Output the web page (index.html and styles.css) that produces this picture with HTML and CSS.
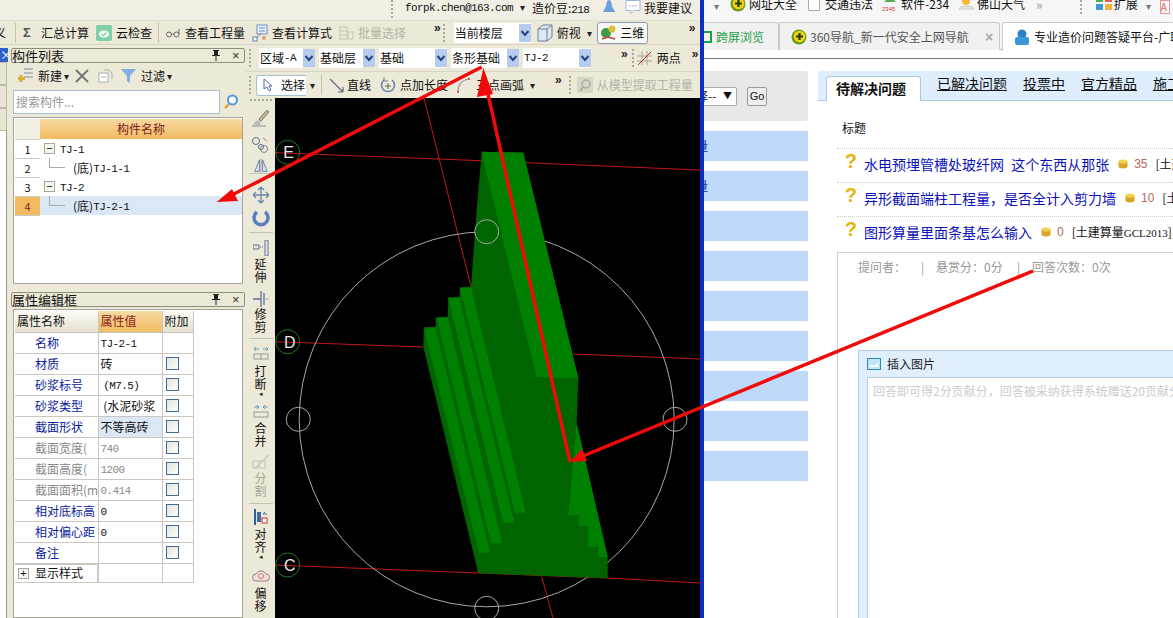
FILE: index.html
```html
<!DOCTYPE html>
<html lang="zh-CN">
<head>
<meta charset="utf-8">
<title>GCL2013</title>
<link rel="stylesheet" href="styles.css">
</head>
<body>
<svg class="defs" aria-hidden="true">
  <symbol id="chev" viewBox="0 0 12 18"><path d="M2.5 7l3.5 4 3.5-4" fill="none" stroke="#24457f" stroke-width="2"/></symbol>
  <symbol id="i360" viewBox="0 0 16 16"><circle cx="8" cy="8" r="7.5" fill="#6b9e12"/><circle cx="8.5" cy="7.5" r="5.8" fill="#f2d21c"/><path d="M8.5 4v7M5 7.5h7" stroke="#23400a" stroke-width="2.2"/></symbol>
  <symbol id="coin" viewBox="0 0 10 10"><ellipse cx="5" cy="2.5" rx="4.5" ry="2" fill="#f1d24c"/><path d="M.5 2.5v5c0 1.2 2 2 4.5 2s4.5-.8 4.5-2v-5c0 1.2-2 2-4.5 2s-4.5-.8-4.5-2z" fill="#d9a520"/></symbol>
</svg>
<div class="stage">
  <section class="app">
    <div class="row1">
      <i class="grip g1"></i>
      <span class="m email">forpk.chen@163.com</span>
      <span class="caret c1">▾</span>
      <span class="bean">造价豆:<span class="m">218</span></span>
      <svg class="bell" width="14" height="15" viewBox="0 0 14 15"><path d="M7 0c2 0 2.500 2 3 6l3 6H1l3-6C4.500 2 5 0 7 0z" fill="#6f9fd8"/></svg>
      <svg class="bubble" width="16" height="15" viewBox="0 0 16 15"><path d="M1 .5h14v10H9l-3 3v-3H1z" fill="#fff" stroke="#9db4d6"/><path d="M4 6h8" stroke="#9db4d6" stroke-dasharray="2 1"/></svg>
      <span class="sug">我要建议</span>
    </div>
    <div class="row2">
      <span class="cut">义</span><i class="vsep s1"></i>
      <span class="sigma">Σ</span><span class="t2 a1">汇总计算</span>
      <svg class="a2" width="16" height="16" viewBox="0 0 16 16"><rect width="16" height="16" rx="2" fill="#7fd0a8"/><ellipse cx="8" cy="9" rx="5" ry="3.500" fill="#fff"/><path d="M5.500 9l2 1.500 3-3" fill="none" stroke="#7fd0a8" stroke-width="1.500"/></svg>
      <span class="t2 a3">云检查</span><i class="vsep s2"></i>
      <svg class="a4" width="14" height="10" viewBox="0 0 14 10"><circle cx="3" cy="6.500" r="2.500" fill="none" stroke="#666"/><circle cx="10.500" cy="6.500" r="2.500" fill="none" stroke="#666"/><path d="M5.500 6h2.500M13 6V1" stroke="#666"/></svg>
      <span class="t2 a5">查看工程量</span>
      <svg class="a6" width="16" height="18" viewBox="0 0 16 18"><rect x="5" y="1" width="10" height="9" fill="#e6eefb" stroke="#6f8fc4"/><path d="M7 4h6M7 7h6" stroke="#6f8fc4"/><path d="M3 16L9 9" stroke="#888"/><rect x="1" y="13" width="4" height="4" fill="#fff" stroke="#5b7fb8"/><circle cx="12" cy="14" r="2" fill="#d9a86a"/></svg>
      <span class="t2 a7">查看计算式</span>
      <svg class="a8" width="16" height="16" viewBox="0 0 16 16"><path d="M1 2h9M1 6h9M1 10h9M1 14h9M2 2v12M9 2v12" stroke="#c9c6b8"/><rect x="10" y="7" width="5" height="7" fill="none" stroke="#c9c6b8"/></svg>
      <span class="t2 off a9">批量选择</span>
      <span class="more m1">»</span><i class="grip g2"></i>
      <span class="fld floor">当前楼层<svg class="dd" width="12" height="18"><use href="#chev"/></svg></span>
      <svg class="a10" width="16" height="18" viewBox="0 0 16 18"><path d="M1 5l5-4h9v12l-5 4H1z" fill="#dbe8f2" stroke="#6d7f90"/><path d="M1 5h9v12M10 5l5-4" fill="none" stroke="#6d7f90"/></svg>
      <span class="t2 a11">俯视</span>
      <span class="caret c2">▾</span>
      <span class="btn3d"><svg width="18" height="17" viewBox="0 0 18 17"><circle cx="6" cy="9" r="5" fill="#3f9a45"/><circle cx="12" cy="5" r="3.500" fill="#d8c13c"/><path d="M2 15l6-2 7 2" fill="none" stroke="#b44" stroke-width="1.500"/></svg>三维</span>
      <span class="more m2">»</span>
    </div>
    <div class="main">
      <aside class="side">
        <div class="sidehead">×</div>
        <div class="sidetab"></div><div class="sidetab"></div><div class="sidetab"></div>
        <div class="sidebody"></div>
      </aside>
      <div class="panels">
        <div class="ptitle"><span>构件列表</span><b class="pin">
          <svg width="8" height="11" viewBox="0 0 8 11"><path d="M1 0h6v1H6v4h2v1H4.500v5h-1V6H0V5h2V1H1z" fill="#222"/></svg></b><b class="x">×</b></div>
        <div class="ptools">
          <svg class="p1" width="17" height="17" viewBox="0 0 17 17"><path d="M7 2h9M7 6h9M7 10h9" stroke="#7a8ea8"/><path d="M4 8v7M1 11.500h7" stroke="#d4b23c" stroke-width="3"/></svg>
          <span class="p2">新建</span><span class="caret c3">▾</span>
          <svg class="p3" width="14" height="14" viewBox="0 0 14 14"><path d="M1 1l12 12M13 1L1 13" stroke="#777" stroke-width="2"/></svg>
          <svg class="p4" width="16" height="14" viewBox="0 0 16 14"><rect x="1" y="4" width="9" height="9" fill="#fff" stroke="#a8b2bf"/><path d="M6 1h5l3 3v6" fill="none" stroke="#a8b2bf"/><path d="M3 8h5" stroke="#a8b2bf"/></svg>
          <svg class="p5" width="15" height="14" viewBox="0 0 15 14"><path d="M0 0h15L9 7v7l-3-2V7z" fill="#83aee0"/></svg>
          <span class="p6">过滤</span><span class="caret c4">▾</span>
        </div>
        <div class="psearch"><span class="sinput">搜索构件...</span>
          <svg width="16" height="16" viewBox="0 0 16 16"><circle cx="9.500" cy="6" r="4.500" fill="#fff" stroke="#4e9ad8" stroke-width="2"/><path d="M6 10l-4 4" stroke="#e0a73c" stroke-width="2.500"/></svg></div>
        <div class="pbody listbody">
          <table class="ltable">
            <tr class="lh"><th class="n"></th><th class="h">构件名称</th></tr>
            <tr><td class="n">1</td><td class="tc"><i class="box">−</i><span class="m">TJ-1</span></td></tr>
            <tr><td class="n">2</td><td class="tc"><i class="conn"></i><span>(底)</span><span class="m">TJ-1-1</span></td></tr>
            <tr><td class="n">3</td><td class="tc"><i class="box">−</i><span class="m">TJ-2</span></td></tr>
            <tr class="sel"><td class="n">4</td><td class="tc"><i class="conn"></i><span>(底)</span><span class="m">TJ-2-1</span></td></tr>
          </table>
        </div>
        <div class="ptitle t-second"><span>属性编辑框</span><b class="pin">
          <svg width="8" height="11" viewBox="0 0 8 11"><path d="M1 0h6v1H6v4h2v1H4.500v5h-1V6H0V5h2V1H1z" fill="#222"/></svg></b><b class="x">×</b></div>
        <div class="pbody propbody">
          <table class="ptable">
            <tr class="ph"><th class="pn-h">属性名称</th><th class="pv-h">属性值</th><th class="pa-h">附加</th></tr>
            <tr><td class="pn">名称</td><td><span class="m">TJ-2-1</span></td><td></td></tr>
            <tr><td class="pn">材质</td><td>砖</td><td><i class="cb"></i></td></tr>
            <tr><td class="pn">砂浆标号</td><td>&nbsp;<span class="m">(M7.5)</span></td><td><i class="cb"></i></td></tr>
            <tr><td class="pn">砂浆类型</td><td class="clip">&nbsp;(水泥砂浆</td><td><i class="cb"></i></td></tr>
            <tr><td class="pn">截面形状</td><td class="cur">不等高砖</td><td><i class="cb"></i></td></tr>
            <tr class="dis"><td class="pn">截面宽度(</td><td><span class="m">740</span></td><td><i class="cb"></i></td></tr>
            <tr class="dis"><td class="pn">截面高度(</td><td><span class="m">1200</span></td><td><i class="cb"></i></td></tr>
            <tr class="dis"><td class="pn clip">截面面积(m</td><td><span class="m">0.414</span></td><td><i class="cb"></i></td></tr>
            <tr><td class="pn">相对底标高</td><td><span class="m">0</span></td><td><i class="cb"></i></td></tr>
            <tr><td class="pn">相对偏心距</td><td><span class="m">0</span></td><td><i class="cb"></i></td></tr>
            <tr><td class="pn">备注</td><td></td><td><i class="cb"></i></td></tr>
            <tr class="plast"><td class="pshow"><i class="box">+</i>显示样式</td><td></td><td></td></tr>
          </table>
        </div>
      </div>
      <div class="work">
        <div class="row3">
          <i class="grip g3"></i>
          <span class="fld f1">区域<span class="m">-A</span></span><svg class="dd" width="12" height="18"><use href="#chev"/></svg>
          <span class="fld f2">基础层</span><svg class="dd" width="12" height="18"><use href="#chev"/></svg>
          <span class="fld f3">基础<svg class="dd" width="12" height="18"><use href="#chev"/></svg></span>
          <span class="fld f4">条形基础</span><svg class="dd" width="12" height="18"><use href="#chev"/></svg>
          <span class="fld f5"><span class="m">TJ-2</span><svg class="dd" width="12" height="18"><use href="#chev"/></svg></span>
          <span class="more m3">»</span><i class="grip g4"></i>
          <svg class="r1" width="15" height="16" viewBox="0 0 15 16"><path d="M0 6h15M0 11h15M5 1v14M10 1v14" stroke="#a9a594"/><path d="M1 15L14 2" stroke="#a33"/></svg>
          <span class="r2">两点</span>
          <span class="more m4">»</span>
        </div>
        <div class="row4">
          <i class="grip g5"></i>
          <span class="selbtn"><svg width="12" height="14" viewBox="0 0 12 14"><path d="M2 1v10l3-2 2 4 2-1-2-4h3z" fill="#fff" stroke="#4f6ea6"/></svg><span>选择</span></span>
          <span class="caret c5">▾</span><i class="vsep s3"></i>
          <svg class="q1" width="15" height="15" viewBox="0 0 15 15"><path d="M1 1l13 13M14 14V9M14 14H9" fill="none" stroke="#667" stroke-width="1.200"/></svg>
          <span class="q2">直线</span>
          <svg class="q3" width="16" height="16" viewBox="0 0 16 16"><path d="M4 3a6.500 6.500 0 1 0 8 0" fill="none" stroke="#6a7fa6" stroke-width="1.500"/><path d="M8 6v6M5 9h6" stroke="#666"/><path d="M4 0v4h4" fill="none" stroke="#6a7fa6"/></svg>
          <span class="q4">点加长度</span>
          <svg class="q5" width="14" height="16" viewBox="0 0 14 16"><path d="M2 15C2 8 6 3 13 2" fill="none" stroke="#999" stroke-width="1.200"/><circle cx="2" cy="15" r="1" fill="#d33"/><circle cx="13" cy="2" r="1" fill="#d33"/></svg>
          <span class="q6">三点画弧</span><span class="caret c6">▾</span>
          <span class="more m5">»</span><i class="grip g6"></i>
          <svg class="q7" width="16" height="16" viewBox="0 0 16 16"><rect width="16" height="16" fill="#d9d6c8"/><circle cx="9" cy="7" r="4" fill="none" stroke="#aaa" stroke-width="1.500"/><path d="M6 10l-3 4" stroke="#aaa" stroke-width="2"/></svg>
          <span class="q8 off">从模型提取工程量</span>
        </div>
        <div class="cvrow">
          <nav class="vtool">
            <i class="hgrip"></i>
            <svg class="mt5" width="20" height="20" viewBox="0 0 20 20"><path d="M8 11L16 2l2 2-8 9z" fill="#c9b98a" stroke="#777"/><path d="M2 17c2-4 5-6 8-4l-1 4z" fill="#bbb"/><path d="M1 18h14" stroke="#888"/></svg>
            <svg class="mt7" width="20" height="20" viewBox="0 0 20 20"><circle cx="5" cy="6" r="3.500" fill="none" stroke="#5c7096"/><circle cx="13" cy="14" r="3.500" fill="none" stroke="#888"/><circle cx="10" cy="12" r="2.500" fill="none" stroke="#5c7096"/><path d="M12 3l4 3" stroke="#888"/></svg>
            <svg class="mt4" width="18" height="14" viewBox="0 0 20 18"><path d="M8 1L2 16h6zM12 1l6 15h-6z" fill="#d5e0ef" stroke="#5c7096"/><path d="M10 0v18" stroke="#888"/></svg>
            <i class="hsep"></i>
            <svg class="mt12" width="18" height="18" viewBox="0 0 18 18"><path d="M9 1v16M1 9h16M9 1l-3 3M9 1l3 3M9 17l-3-3M9 17l3-3M1 9l3-3M1 9l3 3M17 9l-3-3M17 9l-3 3" fill="none" stroke="#6b86ad" stroke-width="1.300"/></svg>
            <svg class="mt5" width="18" height="18" viewBox="0 0 18 18"><path d="M5 3a7 7 0 1 0 8 0" fill="none" stroke="#5a7fc0" stroke-width="3.500"/></svg>
            <i class="hsep mt5"></i>
            <svg class="mt7" width="16" height="16" viewBox="0 0 16 16"><path d="M0 5h6v4H0zM12 0h3v16h-3z" fill="none" stroke="#5c7096"/><path d="M7 7h4" stroke="#5c7096" stroke-dasharray="1 1"/></svg>
            <span class="vt mt2">延伸</span>
            <svg class="mt8" width="16" height="16" viewBox="0 0 16 16"><path d="M0 8h8M8 0v16M11 2v12" stroke="#5c7096" stroke-width="1.300"/><path d="M11 8h5" stroke="#aaa"/></svg>
            <span class="vt mt1">修剪</span>
            <i class="hsep mt5"></i>
            <svg class="mt7" width="16" height="14" viewBox="0 0 16 14"><path d="M1 3h5M15 3h-5M1 3l2-2M1 3l2 2M15 3l-2-2M15 3l-2 2" fill="none" stroke="#5c9ac0"/><rect x="1" y="8" width="14" height="5" fill="none" stroke="#999"/><path d="M8 8v5" stroke="#999"/></svg>
            <span class="vt mt5">打断</span><span class="tri">◂</span>
            <svg class="mt7" width="16" height="14" viewBox="0 0 16 14"><path d="M1 3h5M15 3h-5M6 3L4 1M6 3L4 5M10 3l2-2M10 3l2 2" fill="none" stroke="#5c9ac0"/><rect x="1" y="8" width="14" height="5" fill="none" stroke="#999"/></svg>
            <span class="vt mt4">合并</span>
            <svg class="mt7" width="20" height="16" viewBox="0 0 20 16"><path d="M2 7h12v7H2zM8 7v7M4 14L18 1" fill="none" stroke="#c9c6b8" stroke-width="1.200"/></svg>
            <span class="vt off mt2">分割</span>
            <i class="hsep mt6"></i>
            <svg class="mt5" width="14" height="16" viewBox="0 0 14 16"><path d="M1 0v16" stroke="#2f5d9e" stroke-width="2"/><rect x="3" y="3" width="4" height="10" fill="#3d6db0"/><rect x="8" y="9" width="5" height="5" fill="#fff" stroke="#c33"/><path d="M13 5H9l2-2" fill="none" stroke="#5c7096"/></svg>
            <span class="vt mt3">对齐</span><span class="tri">◂</span>
            <svg class="mt8" width="18" height="15" viewBox="0 0 18 15"><path d="M4 13a3.500 3.500 0 0 1 0-7 5.500 5.500 0 0 1 10 0 3.500 3.500 0 0 1 0 7z" fill="#f3dcdc" stroke="#888"/><circle cx="9" cy="8" r="2.500" fill="none" stroke="#c77"/></svg>
            <span class="vt mt4">偏移</span>
          </nav>
          <div class="canvas">
            <svg class="scene" width="425" height="520" viewBox="275 98 425 520">
              <g class="grid">
                <path d="M275 152.700L481 160.700M525 162.700L700 170M275 341.700L423 347M573 354L700 359M275 565L478 573M478 573L608 578L700 583M424 98L471 286.700M541.700 576.700L553 618"/>
              </g>
              <g class="ring">
                <circle cx="486.700" cy="419.300" r="187.500"/>
              </g>
              <path class="dk" d="M481.700 151.700L523.300 152.700L578.300 378.300L576.700 423.300L607.700 557.300V578.300L478.300 573.300L423.300 346.700L424 327.300L435.700 326.700V317.300L447.700 316.700L448.300 297.300L459.300 296.700L460 287.300L471 286.700L476.700 210z"/>
              <path class="lt" d="M481.700 151.700L523.300 152.700L578.300 378.300L536.700 377.300L483.300 160z"/>
              <path class="lt" d="M424.500 330L435.300 327.300L490 552.700L479 552.700z"/>
              <path class="lt" d="M436.700 318.300L447.700 317.300L502 542.700L491 542.700z"/>
              <path class="lt" d="M448.300 298.300L459.300 297.700L514.300 522.700L503.300 522.700z"/>
              <path class="lt" d="M460 288.300L471 287.700L525.700 512.700L515 512.700z"/>
              <path class="lt" d="M576.700 423.300L607.700 557.300H598.300V546.700H588.300V526H579V515H568.300z"/>
              <g class="ring thin">
                <circle cx="486.700" cy="231.700" r="12"/><circle cx="298.300" cy="419.300" r="12"/><circle cx="675" cy="419.300" r="12"/><circle cx="486.700" cy="608.300" r="12"/>
              </g>
              <g class="axis">
                <circle cx="287.700" cy="152.300" r="12"/><circle cx="287.700" cy="341.700" r="12"/><circle cx="287.700" cy="565" r="12"/>
              </g>
              <text class="lbl" x="288.700" y="158">E</text>
              <text class="lbl" x="289.700" y="347.500">D</text>
              <text class="lbl" x="289.700" y="571">C</text>
            </svg>
          </div>
        </div>
      </div>
    </div>
  </section>
  <div class="bar"></div>
  <section class="browser">
    <div class="favs">
      <span class="caret c7">▾</span>
      <svg class="b1" width="16" height="16"><use href="#i360"/></svg><span class="b2">网址大全</span>
      <svg class="b3" width="12" height="15" viewBox="0 0 12 15"><path d="M.5.500h7l4 4v10H.5z" fill="#fff" stroke="#aaa"/></svg><span class="b4">交通违法</span>
      <svg class="b5" width="16" height="16" viewBox="0 0 16 16"><path d="M8 0l6 6H2z" fill="#5aa85a"/><text class="num" x="0" y="15">2345</text></svg><span class="b6">软件-234</span>
      <svg class="b7" width="17" height="14" viewBox="0 0 17 14"><circle cx="8" cy="5" r="4" fill="#f6b93b"/><path d="M1 13c1-4 14-4 15 0z" fill="#e6e6e6" stroke="#ccc"/></svg><span class="b8">佛山天气</span>
      <span class="b9">»</span><i class="grip g7"></i>
      <svg class="b10" width="16" height="14" viewBox="0 0 16 14"><rect width="7" height="6" fill="#4caf50"/><rect x="9" width="7" height="6" fill="#e55"/><rect y="8" width="7" height="6" fill="#3c9ad6"/><rect x="9" y="8" width="7" height="6" fill="#f1b43c"/></svg>
      <span class="b11">扩展</span><span class="caret c8">▾</span>
      <span class="b12">A</span>
    </div>
    <div class="tabs">
      <div class="tab t1"><i class="scr"></i>跨屏浏览</div>
      <div class="tab t2b"><svg width="16" height="16"><use href="#i360"/></svg><span>360导航_新一代安全上网导航</span><b>×</b></div>
      <div class="tab t3"><svg width="16" height="16" viewBox="0 0 16 16"><circle cx="8" cy="5" r="4.500" fill="#2f7fc8"/><rect x="1" y="8" width="14" height="8" rx="2" fill="#3a98d8"/></svg><span>专业造价问题答疑平台-广联达服务新干线</span></div>
    </div>
    <div class="tabgap"></div>
    <div class="page">
      <aside class="nav">
        <div class="navbox"><span class="sel-mini"><span class="sm-t">选择--</span><b>▼</b></span><span class="go">Go</span></div>
        <div class="navitem"><span>量</span></div><div class="navitem"><span>量</span></div><div class="navitem"></div>
        <div class="navitem"></div><div class="navitem"></div><div class="navitem"></div>
        <div class="navitem"></div><div class="navitem"></div><div class="navitem"></div>
      </aside>
      <main class="qa">
        <div class="qtabs">
          <span class="qt on">待解决问题</span><a class="qt">已解决问题</a><a class="qt">投票中</a><a class="qt">官方精品</a><a class="qt">施工</a>
        </div>
        <div class="qhead">标题</div>
        <div class="qrow"><span class="q">?</span><a>水电预埋管槽处玻纤网 这个东西从那张</a><svg class="coin" width="10" height="10"><use href="#coin"/></svg><span class="pts">35</span><span class="cat">[土建算量GCL2013]</span></div>
        <div class="qrow"><span class="q">?</span><a>异形截面端柱工程量&#xFF0C;是否全计入剪力墙</a><svg class="coin" width="10" height="10"><use href="#coin"/></svg><span class="pts">10</span><span class="cat">[土建算量GCL2013]</span></div>
        <div class="qrow last"><span class="q">?</span><a>图形算量里面条基怎么输入</a><svg class="coin" width="10" height="10"><use href="#coin"/></svg><span class="pts">0</span><span class="cat">[土建算量<span class="gcl">GCL2013</span>]</span></div>
        <div class="detail">
          <div class="meta"><span class="w1">提问者&#xFF1A;</span><i>|</i><span class="w2">悬赏分&#xFF1A;0分</span><i>|</i><span>回答次数&#xFF1A;0次</span></div>
          <div class="editor">
            <div class="edbar"><svg width="14" height="12" viewBox="0 0 14 12"><rect x=".5" y=".5" width="13" height="11" fill="#bfe6f5" stroke="#2f86b8"/><path d="M2 9l3-3 2 2 4-3v4z" fill="#fff"/></svg><span>插入图片</span></div>
            <div class="edarea">回答即可得2分贡献分&#xFF0C;回答被采纳获得系统赠送20贡献分</div>
          </div>
        </div>
      </main>
    </div>
  </section>
  <svg class="arrows" width="1173" height="618" viewBox="0 0 1173 618" aria-hidden="true">
    <path d="M481.700 67L228 197"/>
    <path class="head" d="M216.700 202L232 189L238 201z"/>
    <path d="M570 462L486 85"/>
    <path class="head" d="M483.300 68L477 97L493 94z"/>
    <path d="M1033 271L583 456"/>
    <path class="head" d="M570 462L582 449L587 461z"/>
  </svg>
</div>
</body>
</html>
```

FILE: styles.css
```css
* { box-sizing: border-box; }
html, body { margin: 0; padding: 0; }
body {
  width: 1173px; height: 618px; overflow: hidden; background: #fff;
  font: 12px/16px "Noto Sans CJK SC", "Liberation Sans", sans-serif; color: #111;
}
i, b { font-style: normal; }
svg { flex: none; display: block; }
.defs { display: none; }
.m { font-family: "Liberation Mono", monospace; font-size: 11px; letter-spacing: -.6px; }
.off { color: #b5b3a8; }
.stage { position: relative; display: flex; width: 1173px; height: 618px; overflow: hidden; }
.app { width: 700px; height: 618px; display: flex; flex-direction: column; background: #ece9d8; }
.bar { width: 4px; background: #0a2fc2; }
.browser { width: 469px; display: flex; flex-direction: column; background: #fff; }
.arrows { position: absolute; left: 0; top: 0; pointer-events: none; }
.arrows path { fill: none; stroke: #f00a0a; stroke-width: 3.500; }
.arrows .head { fill: #f00a0a; stroke: none; }
.grip { display: block; flex: none; width: 2px; height: 18px; border-left: 2px dotted #aaa79a; }
.caret { flex: none; font-size: 10px; line-height: 12px; color: #222; }
.vsep { display: block; flex: none; width: 1px; height: 20px; background: #c4c1b0; }
.more { flex: none; font: bold 12px/12px "Liberation Sans", sans-serif; color: #222; align-self: flex-start; }

/* top rows */
.row1 { height: 20px; flex: none; display: flex; align-items: flex-start; background: #f1efe4; }
.row1 > * { margin-top: 0; white-space: nowrap; }
.g1 { margin-left: 391px; }
.email { margin-left: 12px; width: 108px; }
.row1 .c1 { margin-left: 7px; margin-top: 1px; }
.bean { margin-left: 7px; width: 62px; }
.row1 .bell { margin-left: 8px; }
.row1 .bubble { margin-left: 9px; }
.sug { margin-left: 3px; }
.row2 { height: 25px; flex: none; display: flex; align-items: center; border-top: 1px solid #e2dfcf; border-bottom: 1px solid #d8d5c4; overflow: hidden; }
.t2 { flex: none; }
.cut { width: 6px; overflow: hidden; direction: rtl; }
.s1 { margin-left: 9px; }
.sigma { margin-left: 7px; font: 700 13px/16px "Liberation Sans", sans-serif; color: #555; width: 10px; }
.a1 { margin-left: 8px; }
.a2 { margin-left: 7px; }
.a3 { margin-left: 4px; }
.s2 { margin-left: 6px; }
.a4 { margin-left: 7px; }
.a5 { margin-left: 5px; }
.a6 { margin-left: 7px; }
.a7 { margin-left: 4px; }
.a8 { margin-left: 6px; }
.a9 { margin-left: 4px; }
.m1 { margin-left: 28px; margin-top: 1px; }
.g2 { margin-left: 2px; }
.fld { flex: none; display: flex; align-items: center; height: 20px; background: #fff; padding-left: 1px; white-space: nowrap; }
.floor { margin-left: 9px; width: 77px; justify-content: space-between; }
.f3, .f5 { justify-content: space-between; }
.a10 { margin-left: 6px; }
.a11 { margin-left: 4px; }
.c2 { margin-left: 6px; }
.btn3d { flex: none; margin-left: 5px; width: 51px; height: 22px; display: flex; align-items: center; justify-content: center; gap: 2px; background: #f8f8f4; border: 1px solid #8d9bb0; border-radius: 3px; }
.m2 { margin-left: 41px; margin-top: 1px; }
.dd { background: #b7cbee; border-radius: 1px; }

.main { flex: 1; min-height: 0; display: flex; }
.side { width: 10px; flex: none; display: flex; flex-direction: column; padding-top: 3px; }
.sidehead { height: 14px; width: 8px; background: #2f62c8; color: #fff; font-size: 12px; line-height: 14px; overflow: hidden; }
.sidetab { height: 23px; width: 7px; border: 1px solid #bdbaa8; border-left: 0; background: #e8e5d4; }
.sidebody { flex: 1; width: 7px; background: #fff; border-right: 1px solid #9a9a90; }

/* panels */
.panels { width: 236px; flex: none; padding: 3px 1px 0; display: flex; flex-direction: column; }
.ptitle { height: 15px; flex: none; display: flex; align-items: center; border: 1px solid #8f8d80; border-radius: 2px; font-size: 13px; background: #ece9d8; }
.ptitle span { flex: 1; line-height: 13px; }
.pin { width: 8px; margin-right: 12px; }
.x { width: 8px; margin-right: 4px; font: 400 13px/13px "Liberation Sans", sans-serif; color: #333; }
.ptools { height: 27px; flex: none; display: flex; align-items: center; padding-bottom: 2px; }
.p1 { margin-left: 6px; }
.p2 { margin-left: 4px; }
.c3 { margin-left: 2px; }
.p3 { margin-left: 6px; }
.p4 { margin-left: 9px; }
.p5 { margin-left: 7px; }
.p6 { margin-left: 5px; }
.c4 { margin-left: 2px; }
.psearch { height: 24px; flex: none; display: flex; align-items: center; gap: 3px; margin-left: 2px; }
.sinput { width: 207px; height: 24px; padding: 3px 2px; background: #fff; border: 1px solid #a9bfd6; color: #999; }
.pbody { background: #fff; border: 1px solid #a6a498; margin-left: 2px; width: 230px; }
.listbody { height: 167px; margin-top: 3px; padding: 1px; flex: none; }
table { border-collapse: collapse; table-layout: fixed; }
.ltable { width: 227px; }
.ltable th, .ltable td { padding: 0; border: 0; }
.ltable tr { height: 19px; }
.lh { height: 20px !important; }
.ltable .n { width: 25px; text-align: center; background: #fff; border-bottom: 1px solid #c9c9c0; font-size: 11px; font-weight: 400; }
.lh .n { background: #f1efe4; }
.ltable .h { height: 20px; background: linear-gradient(#f6d9a2, #f2bb62); color: #7a1c1c; font-weight: 400; font-size: 12px; line-height: 20px; }
.tc { display: flex; align-items: center; height: 19px; border-bottom: 1px solid #d5d5cc; }
.tc .m { margin-top: 3px; }
.box { display: block; flex: none; width: 11px; height: 11px; margin: 0 5px 0 4px; border: 1px solid #a8a8a0; font: 11px/9px "Liberation Sans", sans-serif; text-align: center; background: #f6f6f0; }
.conn { display: block; flex: none; width: 16px; height: 10px; margin: -9px 8px 0 9px; border-left: 1px solid #aaa; border-bottom: 1px solid #aaa; }
.sel .n { background: #f2bb62; color: #8a2020; }
.sel .tc { background: #dbe7f5; }
.t-second { margin-top: 8px; }
.propbody { margin-top: 2px; flex: 1; padding: 1px; }
.ptable { width: 178px; font-size: 12px; }
.ptable td, .ptable th { padding: 0; border: 1px solid #c8c8c0; height: 21px; font-weight: 400; white-space: nowrap; overflow: hidden; }
.ptable th { border-top: 0; border-left: 0; }
.pn-h { width: 83px; text-align: left; padding-left: 2px !important; background: linear-gradient(#fbfaf4, #e6e2d0); }
.pv-h { width: 64px; text-align: left; padding-left: 2px !important; background: linear-gradient(#f6d9a2, #f2bb62); color: #8a1c1c; }
.pa-h { width: 31px; background: linear-gradient(#fbfaf4, #e6e2d0); text-align: left; padding-left: 2px !important; }
.ptable td { padding-left: 2px; }
.ptable td:first-child { border-left: 0; }
.pn { padding-left: 20px !important; color: #0a1a9c; }
.cb { display: block; width: 13px; height: 13px; margin-left: 1px; border: 1px solid #3f6d9b; background: linear-gradient(135deg, #e4e3da, #fff); }
.cur { background: #dbe7f5; }
.dis .pn, .dis td { color: #8a8a8a; }
.pshow { display: flex; align-items: center; height: 19px !important; }
.pshow .box { margin: 0 6px 0 1px; }
.plast td { height: 19px; }

/* work area */
.work { flex: 1; min-width: 0; display: flex; flex-direction: column; }
.row3 { height: 27px; flex: none; display: flex; align-items: center; border-bottom: 1px solid #d8d5c4; }
.g3 { margin-left: 3px; }
.f1 { margin-left: 8px; width: 44px; }
.f2 { margin-left: 4px; width: 44px; }
.f3 { margin-left: 4px; width: 68px; }
.f4 { margin-left: 4px; width: 56px; }
.f5 { margin-left: 4px; width: 68px; }
.m3 { margin-left: 30px; margin-top: 3px; }
.g4 { margin-left: 4px; }
.r1 { margin-left: 3px; }
.r2 { margin-left: 5px; }
.m4 { margin-left: 11px; margin-top: 3px; }
.row4 { height: 26px; flex: none; display: flex; align-items: center; }
.g5 { margin-left: 3px; }
.selbtn { flex: none; margin-left: 5px; width: 50px; height: 21px; display: flex; align-items: center; gap: 7px; padding-left: 5px; background: #fff; border: 1px solid #a9bfd6; border-radius: 3px 0 0 3px; border-right: 0; white-space: nowrap; }
.c5 { margin-left: 4px; }
.s3 { margin-left: 6px; }
.q1 { margin-left: 7px; }
.q2 { margin-left: 3px; }
.q3 { margin-left: 9px; }
.q4 { margin-left: 4px; }
.q5 { margin-left: 8px; }
.q6 { margin-left: 6px; }
.c6 { margin-left: 6px; }
.m5 { margin-left: 20px; margin-top: 2px; }
.g6 { margin-left: 7px; }
.q7 { margin-left: 6px; }
.q8 { margin-left: 4px; white-space: nowrap; }
.cvrow { flex: 1; min-height: 0; display: flex; }
.vtool { width: 29px; flex: none; display: flex; flex-direction: column; align-items: center; overflow: hidden; }
.hgrip { display: block; width: 22px; height: 4px; flex: none; border-top: 2px dotted #aaa79a; margin-top: 1px; }
.vt { flex: none; width: 13px; font-size: 12px; line-height: 12.500px; text-align: center; word-break: break-all; }
.vt.off { color: #a8a69a; }
.tri { flex: none; font-size: 7px; line-height: 7px; color: #222; }
.hsep { display: block; flex: none; width: 24px; height: 1px; background: #c4c1b0; }
.mt1 { margin-top: 1px; } .mt2 { margin-top: 2px; } .mt3 { margin-top: 3px; }
.mt4 { margin-top: 4px; } .mt5 { margin-top: 5px; } .mt6 { margin-top: 6px; }
.mt7 { margin-top: 7px; } .mt8 { margin-top: 8px; }
.mt12 { margin-top: 12px; }
.canvas { width: 425px; flex: none; background: #000; overflow: hidden; }
.grid path { fill: none; stroke: #c01818; stroke-width: 1; }
.ring circle { fill: none; stroke: #a8a8a8; stroke-width: 1; }
.dk { fill: #006400; }
.lt { fill: #008000; }
.axis circle { fill: none; stroke: #1f7a2a; stroke-width: 1; }
.lbl { fill: #e8e8e8; font: 16px "Liberation Sans", sans-serif; text-anchor: middle; }

/* browser */
.favs { height: 22px; flex: none; display: flex; align-items: flex-start; background: #f6f6f6; overflow: hidden; }
.favs > * { margin-top: -4px; flex: none; white-space: nowrap; }
.favs .c7 { margin-left: 10px; margin-top: 0; color: #777; }
.b1 { margin-left: 11px; }
.b2 { margin-left: 3px; }
.b3 { margin-left: 11px; }
.b4 { margin-left: 5px; }
.b5 { margin-left: 9px; }
.num { font: 6px "Liberation Sans", sans-serif; fill: #c33; }
.b6 { margin-left: 3px; width: 47px; }
.b7 { margin-left: 10px; }
.b8 { margin-left: 2px; }
.b9 { margin-left: 11px; color: #999; font-size: 14px; }
.g7 { margin-left: 37px; }
.b10 { margin-left: 14px; }
.b11 { margin-left: 2px; }
.favs .c8 { margin-left: 8px; margin-top: 0; color: #777; }
.favs .b12 { margin-left: 9px; margin-top: 0; width: 10px; border: 1px solid #d99; color: #d66; font-size: 10px; line-height: 12px; }
.tabs { height: 28px; flex: none; display: flex; background: #f6f6f6; border-bottom: 1px solid #bbb; }
.tab { flex: none; display: flex; align-items: center; height: 28px; background: #f1f1f1; border: 1px solid #c9c9c9; border-bottom: 0; border-radius: 3px 3px 0 0; }
.t1 { width: 75px; color: #1c9e4c; border-left: 0; border-radius: 0 3px 0 0; }
.scr { display: block; width: 8px; height: 12px; margin-right: 4px; border: 2px solid #1c9e4c; border-left: 0; }
.t2b { width: 221px; padding-left: 11px; color: #555; }
.t2b span { margin-left: 3px; width: 157px; white-space: nowrap; }
.t2b b { margin-left: 18px; color: #aaa; font: 700 14px/14px "Liberation Sans", sans-serif; }
.t3 { width: 172px; margin-left: 2px; padding-left: 11px; background: #fff; white-space: nowrap; overflow: hidden; height: 29px; border-right: 0; }
.t3 span { margin-left: 4px; }
.tabgap { height: 9px; flex: none; border-bottom: 1px solid #777; }
.page { flex: 1; min-height: 0; display: flex; padding-top: 12px; }
.nav { width: 104px; flex: none; display: flex; flex-direction: column; gap: 10px; }
.navbox { height: 50px; flex: none; display: flex; align-items: center; background: #e8e8e8; border-radius: 0 3px 3px 0; }
.sel-mini { width: 33px; height: 19px; display: flex; align-items: center; padding-right: 4px; background: #fff; border: 1px solid #aaa; border-left: 0; border-radius: 0 2px 2px 0; overflow: hidden; white-space: nowrap; }
.sm-t { flex: none; margin-left: -20px; }
.sel-mini b { flex: none; margin-left: auto; font-size: 9px; }
.go { width: 20px; height: 19px; margin-left: 10px; background: #eee; border: 1px solid #999; border-radius: 2px; font: 11px/17px "Liberation Sans", sans-serif; text-align: center; }
.navitem { height: 30px; flex: none; display: flex; align-items: center; overflow: hidden; background: #bfd9f8; }
.navitem span { flex: none; margin-left: -8px; color: #0b2f9c; }
.qa { flex: 1; min-width: 0; margin-left: 10px; overflow: hidden; }
.qtabs { height: 30px; display: flex; align-items: flex-end; background: #dfeefc; border-bottom: 1px solid #a9c6e2; padding-left: 8px; white-space: nowrap; }
.qt { flex: none; font-size: 14px; line-height: 22px; margin-left: 16px; text-decoration: underline; color: #111; height: 28px; }
.qt.on { margin-left: 0; width: 95px; height: 25px; margin-bottom: -1px; padding-left: 9px; background: #fff; border: 1px solid #a9c6e2; border-bottom: 0; border-radius: 3px 3px 0 0; font-weight: 700; text-decoration: none; }
.qhead { height: 48px; padding: 19px 0 0 5px; border-bottom: 1px dotted #ccc; margin-left: 19px; }
.qrow { height: 34px; margin-left: 19px; display: flex; align-items: center; padding: 0 0 4px 5px; border-bottom: 1px dotted #ccc; white-space: nowrap; }
.qrow.last { border-bottom: 0; }
.q { flex: none; width: 15px; margin-top: -6px; margin-right: 7px; text-align: right; color: #e3b60d; font: 700 20px/20px "Liberation Sans", sans-serif; }
.qrow a { flex: none; color: #0b10b8; font-size: 14px; word-spacing: 4px; }
.coin { margin-left: 9px; }
.pts { flex: none; margin-left: 6px; color: #b8665e; font: 12px "Liberation Sans", sans-serif; }
.cat { flex: none; margin-left: 8px; font-size: 12px; }
.gcl { font-family: "Liberation Serif", serif; font-size: 11px; }
.detail { margin: 1px 0 0 19px; height: 400px; border: 1px solid #ccc; border-right: 0; }
.meta { display: flex; padding: 6px 0 0 20px; color: #999; height: 97px; white-space: nowrap; }
.meta i { width: 15px; }
.w1 { width: 63px; }
.w2 { width: 81px; }
.editor { margin-left: 20px; height: 300px; background: #e1effc; border: 1px solid #b5cde0; border-right: 0; padding-left: 8px; }
.edbar { height: 26px; display: flex; align-items: center; gap: 6px; color: #222; }
.edarea { height: 270px; padding: 5px; background: #fff; border: 1px solid #b5cde0; border-right: 0; color: #ccc; white-space: nowrap; overflow: hidden; }
```
